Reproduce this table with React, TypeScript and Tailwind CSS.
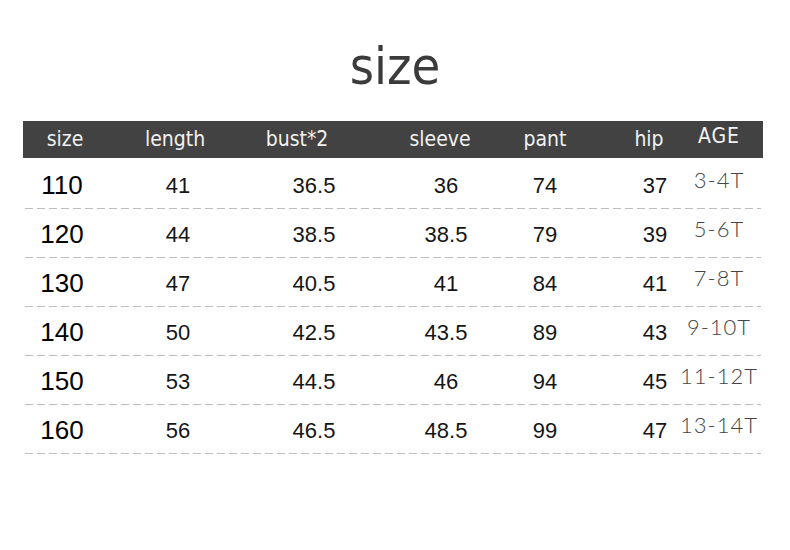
import React from 'react';

const rows = [
  { size: '110', length: '41', bust: '36.5', sleeve: '36', pant: '74', hip: '37', age: '3-4T' },
  { size: '120', length: '44', bust: '38.5', sleeve: '38.5', pant: '79', hip: '39', age: '5-6T' },
  { size: '130', length: '47', bust: '40.5', sleeve: '41', pant: '84', hip: '41', age: '7-8T' },
  { size: '140', length: '50', bust: '42.5', sleeve: '43.5', pant: '89', hip: '43', age: '9-10T' },
  { size: '150', length: '53', bust: '44.5', sleeve: '46', pant: '94', hip: '45', age: '11-12T' },
  { size: '160', length: '56', bust: '46.5', sleeve: '48.5', pant: '99', hip: '47', age: '13-14T' },
];

const techFont = "font-['DejaVu_Sans_Condensed','DejaVu_Sans',sans-serif]";

const App: React.FC = () => {
  return (
    <div className="w-[790px] h-[550px] bg-white overflow-hidden font-['Liberation_Sans',Arial,sans-serif]">
      {/* Title */}
      <div className="h-[121px] pt-[40px] flex justify-center">
        <h1 className={`${techFont} text-[52px] leading-none text-[#3b3b3b]`}>
          size
        </h1>
      </div>

      <div className="ml-[23px] w-[740px]">
        {/* Header */}
        <div className={`h-[37px] bg-[#424242] flex items-center pl-[12px] text-[#f2f2f2] text-[21px] ${techFont}`}>
          <div className="w-[60px] flex justify-center">size</div>
          <div className="w-[60px] ml-[50px] flex justify-center">length</div>
          <div className="w-[60px] ml-[62px] flex justify-center">bust*2</div>
          <div className="w-[60px] ml-[83px] flex justify-center">sleeve</div>
          <div className="w-[60px] ml-[45px] flex justify-center">pant</div>
          <div className="w-[60px] ml-[44px] flex justify-center">hip</div>
          <div className="w-[60px] ml-[10px] flex justify-center pb-[5px] tracking-[1px]">AGE</div>
        </div>

        {/* Rows */}
        <div className="pt-[2px]">
          {rows.map(r => (
            <div key={r.size} className="h-[49px] flex flex-col">
              <div className="flex-1 flex items-center pl-[9px] pt-[3px] text-[22px] text-[#161616]">
                <div className="w-[60px] flex justify-center text-[26px] text-black">{r.size}</div>
                <div className="w-[60px] ml-[56px] flex justify-center">{r.length}</div>
                <div className="w-[60px] ml-[76px] flex justify-center">{r.bust}</div>
                <div className="w-[60px] ml-[72px] flex justify-center">{r.sleeve}</div>
                <div className="w-[60px] ml-[39px] flex justify-center">{r.pant}</div>
                <div className="w-[60px] ml-[50px] flex justify-center">{r.hip}</div>
                <div className="w-[60px] ml-[4px] flex justify-center whitespace-nowrap pb-[12px] text-[22px] font-light tracking-[1px] text-[#444] font-['Lato','DejaVu_Sans',sans-serif]">
                  {r.age}
                </div>
              </div>
              <div className="mx-[2px] h-px bg-[image:repeating-linear-gradient(to_right,#bdbdbd_0px,#bdbdbd_8px,transparent_8px,transparent_12px)]" />
            </div>
          ))}
        </div>
      </div>
    </div>
  );
};

export default App;
